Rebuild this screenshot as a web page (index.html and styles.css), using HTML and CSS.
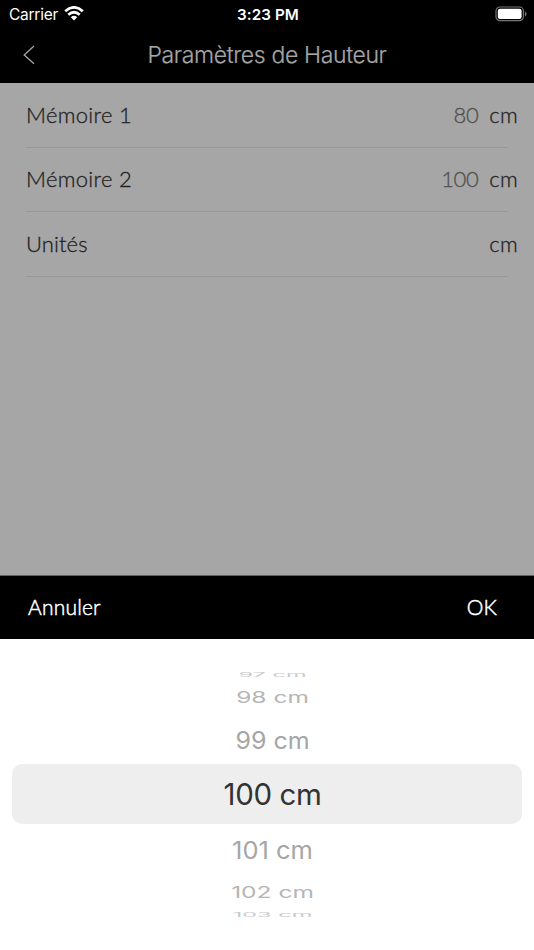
FILE: index.html
```html
<!DOCTYPE html>
<html lang="fr">
<head>
<meta charset="utf-8">
<title>Paramètres de Hauteur</title>
<link rel="stylesheet" href="styles.css">
</head>
<body>
<div class="screen">
  <header class="top">
    <div class="status">
      <div class="carrier"><span class="carrier-name">Carrier</span>
        <svg class="wifi" width="20" height="15" viewBox="0 0 20 15"><g fill="none" stroke="#fff" stroke-width="2.8"><path d="M1.2 5.2Q10-2.4 18.8 5.2"/><path d="M4.3 8.7Q10 3.9 15.7 8.7"/></g><path fill="#fff" d="M6.8 11.2Q10 8.5 13.2 11.2L10 14.5Z"/></svg>
      </div>
      <span class="time">3:23 PM</span>
      <svg class="battery" width="32" height="16" viewBox="0 0 32 16"><rect x="1" y="1" width="27.4" height="13.7" rx="4" fill="none" stroke="#757575" stroke-width="1.2"/><rect x="2.8" y="2.8" width="23.8" height="10.2" rx="2.2" fill="#fff"/><path d="M30 5.4Q31.6 6 31.6 7.9T30 10.4Z" fill="#757575"/></svg>
    </div>
    <nav class="nav">
      <svg class="back" width="12" height="20" viewBox="0 0 12 20"><path d="M11 1L1.2 10L11 18.8" fill="none" stroke="#a6a6a6" stroke-width="1.3"/></svg>
      <h1 class="title">Paramètres de Hauteur</h1>
    </nav>
  </header>
  <main class="settings">
    <div class="row"><span class="label">Mémoire 1</span><span class="value">80</span><span class="unit">cm</span></div>
    <div class="row"><span class="label">Mémoire 2</span><span class="value">100</span><span class="unit">cm</span></div>
    <div class="row"><span class="label units">Unités</span><span class="unit">cm</span></div>
  </main>
  <div class="toolbar"><span class="cancel">Annuler</span><span class="ok">OK</span></div>
  <div class="picker">
    <div class="item far"><span class="w97">97 cm</span></div>
    <div class="item mid"><span class="w98">98 cm</span></div>
    <div class="item near"><span class="w99">99 cm</span></div>
    <div class="item selected"><span>100 cm</span></div>
    <div class="item near"><span class="w101">101 cm</span></div>
    <div class="item mid"><span class="w102">102 cm</span></div>
    <div class="item far"><span class="w103">103 cm</span></div>
  </div>
</div>
</body>
</html>
```
FILE: styles.css
```css
* { box-sizing: border-box; }
body { margin: 0; background: #fff; font-family: Inter, "Liberation Sans", sans-serif; }
.screen { width: 534px; height: 950px; display: flex; flex-direction: column; overflow: hidden; }
.top { height: 83px; background: #000; flex: none; }
.status { height: 27px; display: grid; grid-template-columns: 1fr auto 1fr; align-items: center; padding: 0 7px 0 9px; color: #fff; }
.carrier { display: flex; align-items: center; gap: 6px; font-size: 15.5px; }
.carrier-name { letter-spacing: -0.25px; padding-top: 1px; }
.wifi { margin-top: -1px; }
.time { font-size: 15.2px; font-weight: 600; letter-spacing: 0.1px; padding-top: 1px; }
.battery { justify-self: end; }
.nav { height: 56px; display: grid; grid-template-columns: 35px 1fr 35px; align-items: center; }
.back { margin-left: 23px; }
.title { margin: 0; text-align: center; font-size: 23px; font-weight: 300; color: #a6a6a6; letter-spacing: -0.35px; white-space: nowrap; -webkit-text-stroke: 0.2px #a6a6a6; }
.settings { height: 493px; flex: none; background: #a6a6a6; border-bottom: 1px solid #626262; }
.row { height: 64.5px; padding-bottom: 1px; display: flex; align-items: center; margin: 0 26px; border-bottom: 1px solid #999; font-family: Lato, "Liberation Sans", sans-serif; font-size: 22px; font-weight: 300; color: #222; white-space: nowrap; -webkit-text-stroke: 0.3px currentColor; }
.label { margin-right: auto; letter-spacing: 0.3px; }
.units { letter-spacing: 0.1px; }
.value { color: #505050; margin-right: 11px; letter-spacing: -0.4px; -webkit-text-stroke-width: 0.3px; }
.unit { margin-right: -10px; letter-spacing: 0.3px; }
.toolbar { height: 63px; flex: none; background: #000; color: #fff; display: flex; align-items: center; justify-content: space-between; padding: 0 37px 3px 28px; font-family: Lato, "Liberation Sans", sans-serif; font-size: 21px; font-weight: 300; letter-spacing: 0.2px; -webkit-text-stroke: 0.5px #fff; }
.picker { height: 311px; flex: none; padding: 31.5px 12px 0; background: #fff; }
.item { display: flex; align-items: center; justify-content: center; padding-left: 11px; white-space: nowrap; line-height: 1; }
.item span { display: block; }
.selected { height: 60.5px; margin-top: -1px; padding-top: 2px; background: #eee; border-radius: 10px; font-size: 29.5px; letter-spacing: -0.4px; color: #333; }
.near { height: 49px; font-size: 25px; color: #a6a6a6; }
.selected + .near { height: 49.5px; font-size: 25.5px; padding-top: 1px; }
.mid { height: 37px; font-size: 24.5px; color: #b5b5b5; }
.far { height: 8px; font-size: 23.5px; color: #cacaca; }
.w99, .w101 { transform: scaleY(0.96); }
.w98, .w102 { transform: scaleY(0.65); }
.w97, .w103 { transform: scaleY(0.24); }
```
